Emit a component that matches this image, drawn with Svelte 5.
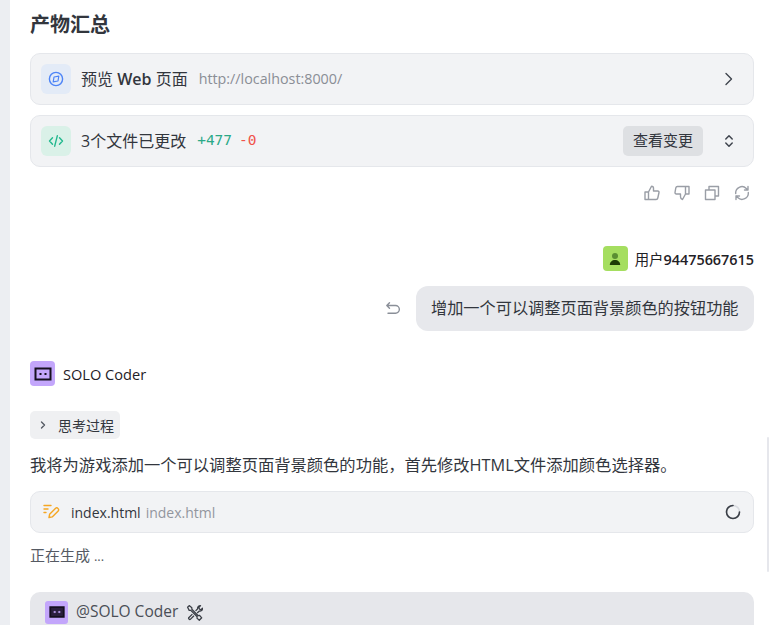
<script lang="ts">
  // outer frame of the agent logo, inner cutout is drawn on top
  const frame = 'M2.500 4.500h15v11h-15z';
</script>

<div class="page">
  <div class="rail"></div>
  <main class="chat">
    <h2 class="title">产物汇总</h2>

    <div class="card artifact">
      <span class="tile blue">
        <svg width="16" height="16" viewBox="0 0 16 16" fill="none" stroke="#4d84f7" stroke-width="1.400">
          <circle cx="8" cy="8" r="6.600"/>
          <path d="M10.800 5.200 10 10 5.200 10.800 6 6z" stroke-width="1.200" stroke-linejoin="round"/>
        </svg>
      </span>
      <span class="label">预览 <b>Web</b> 页面</span>
      <span class="url">http://localhost:8000/</span>
      <svg class="end" width="16" height="16" viewBox="0 0 16 16" fill="none" stroke="#3f444d" stroke-width="1.400" stroke-linecap="round" stroke-linejoin="round">
        <path d="M5 2.500 10.500 8 5 13.500"/>
      </svg>
    </div>

    <div class="card artifact">
      <span class="tile green">
        <svg width="16" height="16" viewBox="0 0 16 16" fill="none" stroke="#22b88e" stroke-width="1.400" stroke-linecap="round" stroke-linejoin="round">
          <path d="M4.500 4.800 1.500 8l3 3.200M11.500 4.800l3 3.200-3 3.200M9.300 2.800 6.700 13.200"/>
        </svg>
      </span>
      <span class="label">3个文件已更改</span>
      <span class="diff"><span class="add">+477</span><span class="del">-0</span></span>
      <span class="view">查看变更</span>
      <svg class="end" width="16" height="16" viewBox="0 0 16 16" fill="none" stroke="#3f444d" stroke-width="1.500" stroke-linecap="round" stroke-linejoin="round">
        <path d="M4.800 6 8 2.800 11.200 6M4.800 10 8 13.200 11.200 10"/>
      </svg>
    </div>

    <div class="actions">
      <svg width="16" height="16" viewBox="0 0 16 16"><path d="M1 7h3.500v7.500H1zM4.500 7l3-5.800c1.300 0 2 .9 2 2V6h4.300c.8 0 1.400.7 1.200 1.500l-1.200 5.500c-.2.900-.8 1.500-1.700 1.500H4.500"/></svg>
      <svg width="16" height="16" viewBox="0 0 16 16"><path d="M11.500 1.500H3.400c-.8 0-1.400.5-1.600 1.300L1 7.500C.9 8.300 1.500 9 2.300 9h4.200v2.800c0 1.200.7 2.400 2 2.700L11.500 9zM11.500 1.500H15V9h-3.500"/></svg>
      <svg width="16" height="16" viewBox="0 0 16 16"><path d="M1.500 5h9.500v9.500H1.500zM5 5V1.500h9.500V11H11"/></svg>
      <svg width="16" height="16" viewBox="0 0 16 16"><path d="M1.700 8.500A6.300 6.300 0 0 1 12.300 3.400L14 5M14 1.500V5h-3.500M14.300 7.500A6.300 6.300 0 0 1 3.700 12.600L2 11M2 14.500V11h3.500"/></svg>
    </div>

    <div class="user-row">
      <span class="avatar user">
        <svg width="16" height="16" viewBox="0 0 16 16">
          <circle cx="8" cy="5" r="3" fill="#5a8f32"/>
          <path d="M2.800 14c0-3 2.300-5 5.200-5s5.200 2 5.200 5z" fill="#1c3a06"/>
        </svg>
      </span>
      <span class="user-name">用户<b>94475667615</b></span>
    </div>

    <div class="bubble-row">
      <svg width="16" height="16" viewBox="0 0 16 16" fill="none" stroke="#8a8f98" stroke-width="1.400" stroke-linecap="round" stroke-linejoin="round">
        <path d="M4.500 1.800 1.800 4.500l2.700 2.700M2 4.500h8.500a3.800 3.800 0 0 1 0 7.700H3"/>
      </svg>
      <div class="bubble">增加一个可以调整页面背景颜色的按钮功能</div>
    </div>

    <div class="agent-row">
      <span class="avatar agent">
        <svg width="20" height="20" viewBox="0 0 20 20">
          <path d={frame} fill="none" stroke="#15101f" stroke-width="2"/>
          <rect x="6.500" y="9" width="2" height="2" fill="#15101f"/>
          <rect x="11.500" y="9" width="2" height="2" fill="#15101f"/>
        </svg>
      </span>
      <span class="agent-name">SOLO Coder</span>
    </div>

    <div class="think">
      <svg width="10" height="10" viewBox="0 0 10 10" fill="none" stroke="#555a63" stroke-width="1.400" stroke-linecap="round" stroke-linejoin="round">
        <path d="M3.500 2 6.500 5l-3 3"/>
      </svg>
      <span>思考过程</span>
    </div>

    <p class="para">我将为游戏添加一个可以调整页面背景颜色的功能，首先修改HTML文件添加颜色选择器。</p>

    <div class="card file">
      <svg width="18" height="18" viewBox="0 0 18 18" fill="none" stroke="#f5a623" stroke-width="1.400" stroke-linecap="round" stroke-linejoin="round">
        <path d="M1 2.500h7M1 6h4M1 9.500h2"/>
        <path d="M6 14.500l.6-3.200 6-6a1.500 1.500 0 0 1 2.200 0l.4.400a1.500 1.500 0 0 1 0 2.200l-6 6z"/>
      </svg>
      <span class="fname">index.html</span>
      <span class="fpath">index.html</span>
      <svg class="end spin" width="16" height="16" viewBox="0 0 16 16" fill="none" stroke-width="1.600" stroke-linecap="round">
        <circle cx="8" cy="8" r="6.500" stroke="#d9dbe0"/>
        <path d="M8 1.500A6.500 6.500 0 1 0 14.500 8" stroke="#3a3e46"/>
      </svg>
    </div>

    <p class="status">正在生成 <span class="dots">...</span></p>

    <div class="composer">
      <span class="avatar agent small">
        <svg width="18" height="18" viewBox="0 0 20 20">
          <path d={frame} fill="#2a1f3d" stroke="#15101f" stroke-width="2"/>
          <path d="M6 10h3M7.500 8.800v2.400M11 10h3M12.500 8.800v2.400" stroke="#c3a6fb" stroke-width="1"/>
        </svg>
      </span>
      <span class="mention">@SOLO Coder</span>
      <svg class="tools" width="17" height="17" viewBox="0 0 16 16" fill="none" stroke="#3a3e46" stroke-width="1.200" stroke-linejoin="round">
        <path d="M1.500 3 3 1.500l2.500 2v1.500l6 6 1.300-.3 2 2.300-2.300 2.300-2.200-2 .2-1.300-6-6H3z"/>
        <path d="M9 6.500 11 4.500c-.4-1.400.7-3 2.700-3L12 3.300l.7 1.500 1.500.6 1.300-1.400c.1 2-1.500 3-2.900 2.600L10.500 8.500M6 9.500 2.800 12.700c-.5.500-.5 1 0 1.500.5.500 1 .5 1.500 0L7.500 11"/>
      </svg>
    </div>
  </main>
  <div class="scrollbar"></div>
</div>

<style>
  :global(body) {
    margin: 0;
    background: #fff;
  }
  .page {
    display: flex;
    position: relative;
    height: 625px;
    overflow: hidden;
    color: #32363d;
    font-family: "Open Sans", "Noto Sans CJK SC", sans-serif;
    font-size: 14px;
  }
  .rail {
    width: 10px;
    flex-shrink: 0;
    background: #eceef2;
  }
  .chat {
    width: 724px;
    margin-left: 20px;
    padding-top: 12px;
    flex-shrink: 0;
  }
  .title {
    margin: 0 0 15px;
    height: 26px;
    line-height: 26px;
    font-size: 20px;
    font-weight: 700;
    color: #32363d;
  }
  .card {
    display: flex;
    align-items: center;
    box-sizing: border-box;
    background: #f2f3f5;
    border: 1px solid #e5e7eb;
    border-radius: 10px;
  }
  .artifact {
    height: 52px;
    margin-bottom: 10px;
    padding: 0 16px 0 10px;
  }
  .tile {
    display: flex;
    align-items: center;
    justify-content: center;
    width: 30px;
    height: 30px;
    border-radius: 6px;
    margin-right: 10px;
    flex-shrink: 0;
  }
  .blue { background: #e3ebf7; }
  .green { background: #daf1e8; }
  .label {
    font-size: 16px;
    white-space: nowrap;
    margin-bottom: 3px;
  }
  .label b { font-weight: 600; }
  .url {
    margin-left: 11px;
    margin-bottom: 2px;
    font-size: 14.300px;
    color: #8a8e96;
  }
  .diff {
    margin-left: 11px;
    margin-bottom: 2px;
    font-family: "DejaVu Sans Mono", monospace;
    font-size: 14.500px;
    display: flex;
    gap: 7px;
  }
  .add { color: #2aa987; }
  .del { color: #f0524a; }
  .view {
    margin-left: auto;
    width: 80px;
    height: 30px;
    line-height: 29px;
    text-align: center;
    border-radius: 5px;
    background: #dee0e3;
    font-size: 15px;
  }
  .end { flex-shrink: 0; }
  .artifact > .end { margin-left: auto; }
  .view + .end { margin-left: 18px; }
  .actions {
    display: flex;
    justify-content: flex-end;
    gap: 14px;
    margin-top: 18px;
    padding-right: 4px;
  }
  .actions svg {
    fill: none;
    stroke: #9a9ea6;
    stroke-width: 1.400;
    stroke-linejoin: round;
    stroke-linecap: round;
  }
  .user-row {
    display: flex;
    justify-content: flex-end;
    align-items: center;
    gap: 7px;
    margin-top: 45px;
  }
  .avatar {
    display: flex;
    align-items: center;
    justify-content: center;
    width: 25px;
    height: 25px;
    border-radius: 4px;
    flex-shrink: 0;
  }
  .user { background: #a5de60; }
  .user-name {
    font-size: 14.400px;
    color: #1f2126;
  }
  .user-name b {
    font-weight: 600;
  }
  .bubble-row {
    display: flex;
    justify-content: flex-end;
    align-items: center;
    gap: 15px;
    margin-top: 15px;
  }
  .bubble {
    box-sizing: border-box;
    width: 338px;
    height: 45px;
    line-height: 45px;
    padding-left: 15px;
    background: #e7e8ec;
    border-radius: 12px;
    font-size: 16.200px;
    white-space: nowrap;
  }
  .agent-row {
    display: flex;
    align-items: center;
    gap: 8px;
    margin-top: 30px;
  }
  .agent { background: #c3a6fb; }
  .agent-name {
    font-size: 14.600px;
    font-weight: 500;
    color: #1f2126;
  }
  .think {
    display: flex;
    align-items: center;
    gap: 10px;
    box-sizing: border-box;
    width: 90px;
    height: 28px;
    margin-top: 25px;
    padding-left: 8px;
    background: #eff0f2;
    border-radius: 5px;
    font-size: 14px;
  }
  .para {
    margin: 14px 0 0;
    height: 24px;
    line-height: 24px;
    font-size: 16.300px;
    white-space: nowrap;
  }
  .file {
    height: 42px;
    margin-top: 14px;
    padding: 0 12px;
  }
  .fname {
    margin-left: 10px;
    font-size: 14px;
  }
  .fpath {
    margin-left: 5px;
    font-size: 14px;
    color: #92969e;
  }
  .file .end { margin-left: auto; }
  .status {
    margin: 12px 0 0;
    height: 20px;
    line-height: 20px;
    font-size: 15px;
    color: #555a63;
  }
  .dots {
    font-size: 13px;
  }
  .composer {
    display: flex;
    align-items: center;
    gap: 8px;
    height: 40px;
    margin-top: 27px;
    padding: 0 15px;
    background: #e6e7eb;
    border-radius: 10px 10px 0 0;
  }
  .small {
    width: 23px;
    height: 23px;
    border-radius: 3px;
  }
  .mention {
    font-size: 15.500px;
    color: #4a4e56;
    margin-bottom: 2px;
  }
  .scrollbar {
    position: absolute;
    left: 767px;
    top: 437px;
    width: 2px;
    height: 135px;
    background: #e6e7ec;
    border-radius: 2px;
  }
</style>
